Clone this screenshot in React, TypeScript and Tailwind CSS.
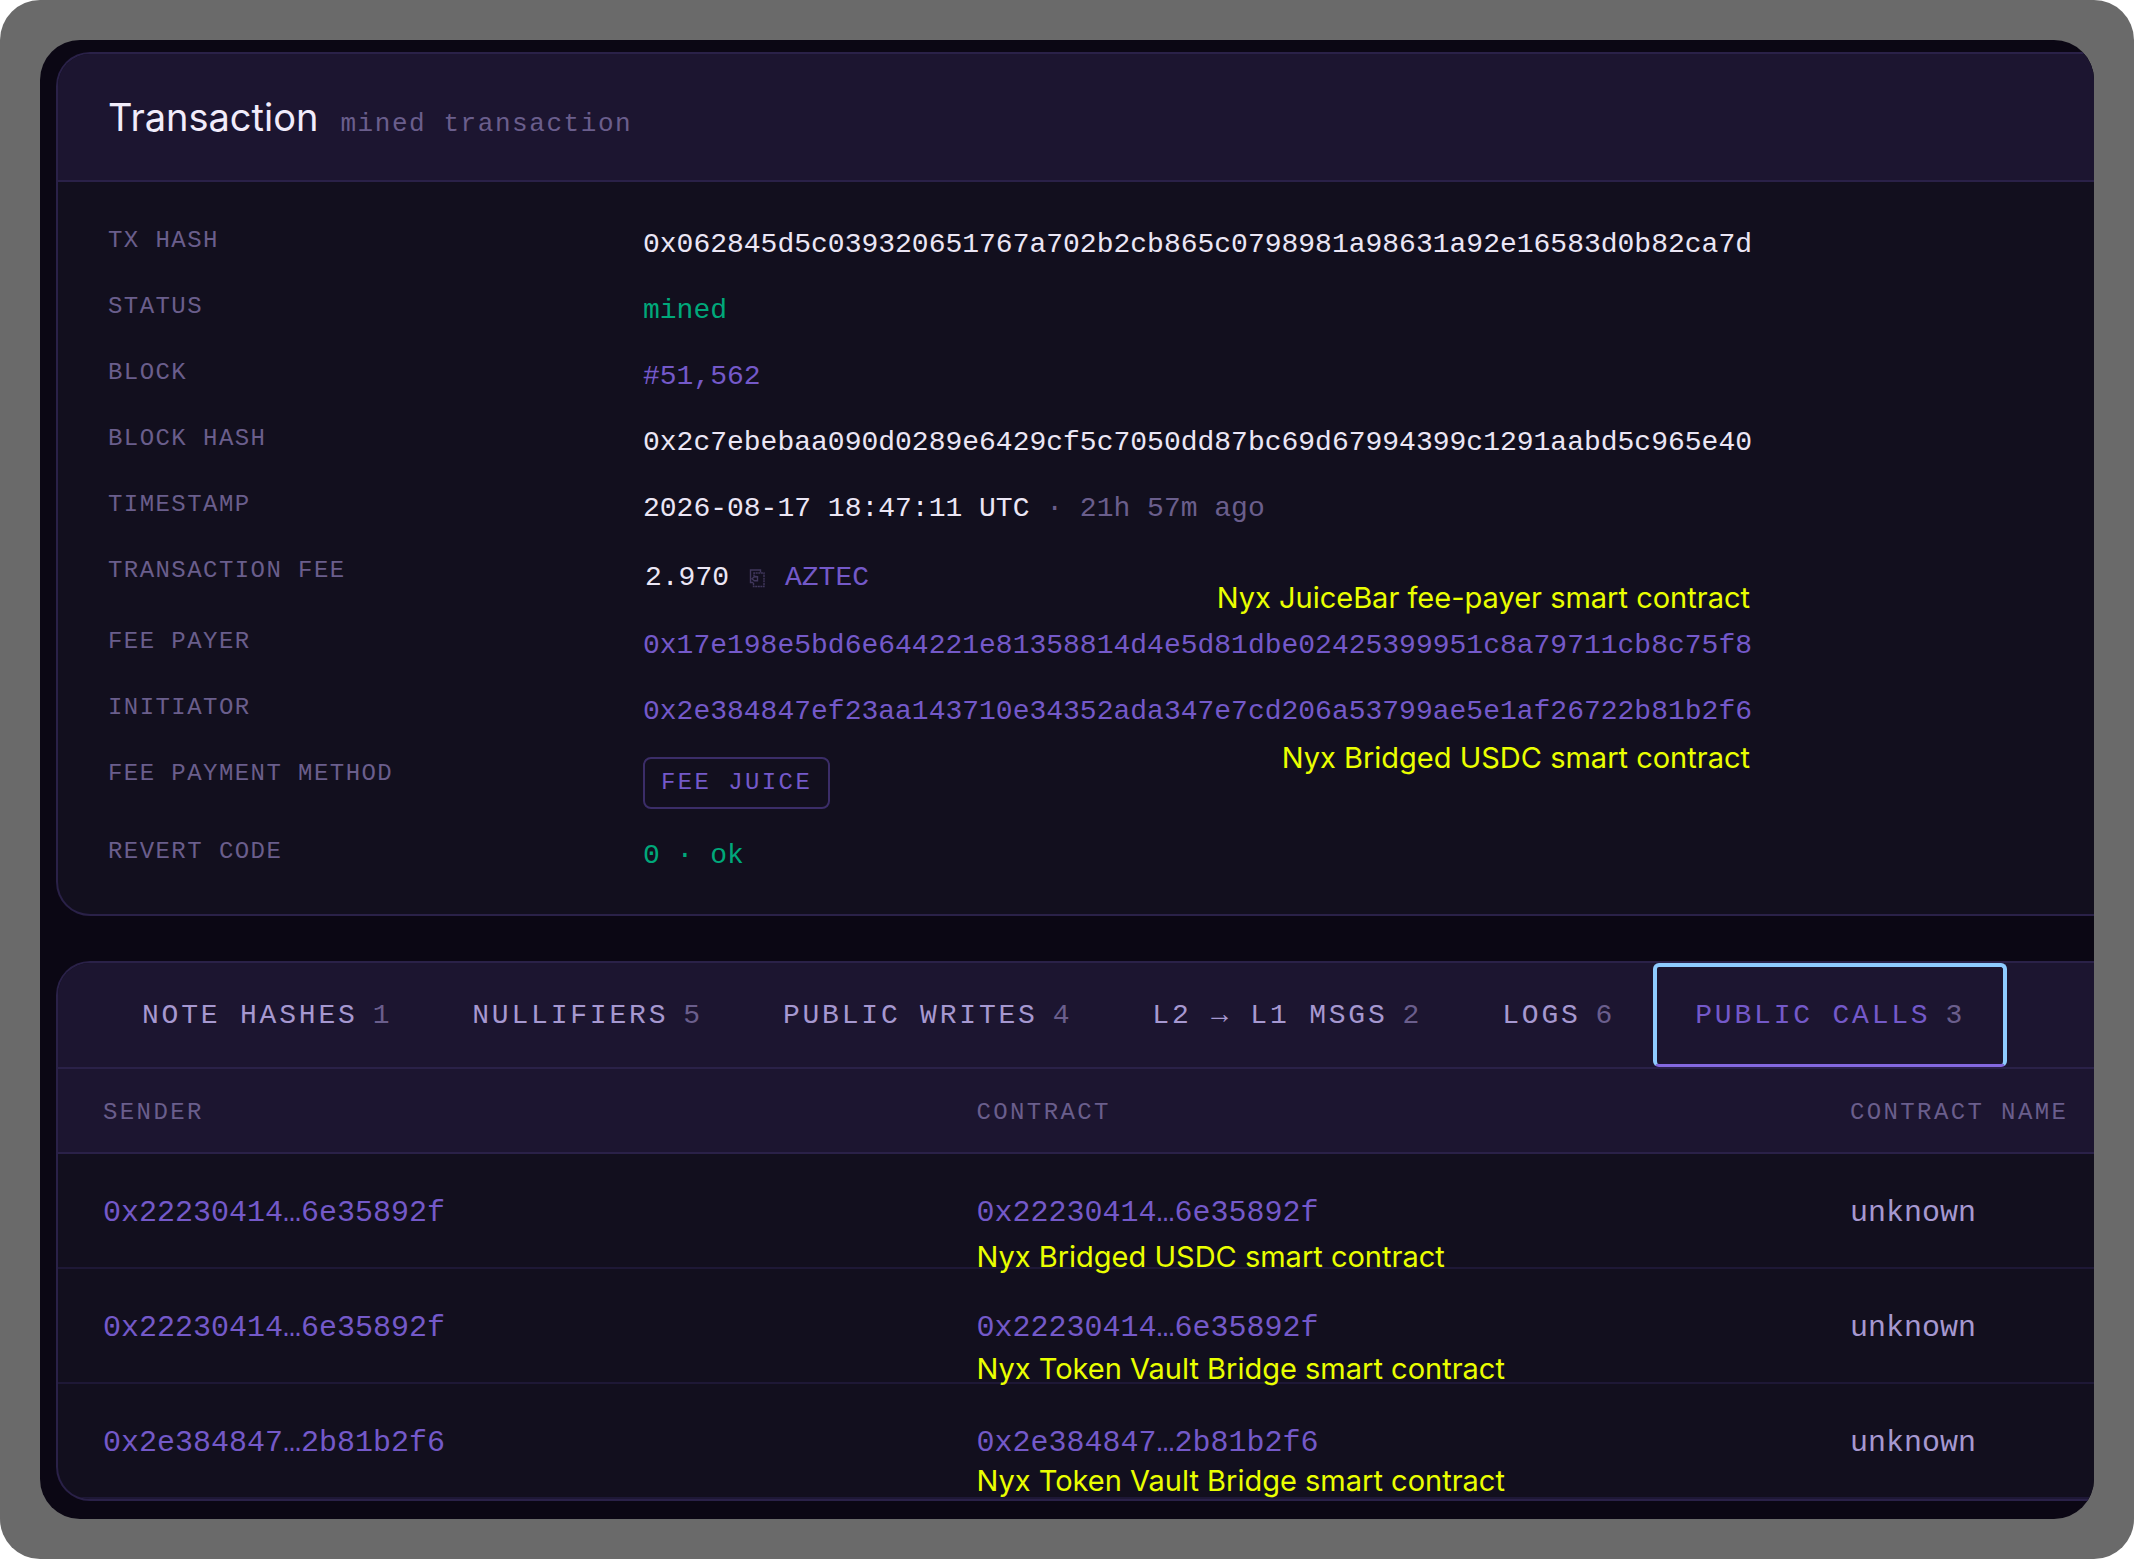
import type { ReactNode } from 'react';

const details: { label: string; value: ReactNode; note?: string; notePosition?: string }[] = [
  { label: 'Tx hash', value: '0x062845d5c039320651767a702b2cb865c0798981a98631a92e16583d0b82ca7d' },
  { label: 'Status', value: <span className="text-[#00a87a]">mined</span> },
  { label: 'Block', value: <a href="#block" className="text-[#7459c9]">#51,562</a> },
  { label: 'Block hash', value: '0x2c7ebebaa090d0289e6429cf5c7050dd87bc69d67994399c1291aabd5c965e40' },
  {
    label: 'Timestamp',
    value: <>2026-08-17 18:47:11 UTC <span className="text-[#6a5e8c]">· 21h 57m ago</span></>,
  },
  {
    label: 'Transaction fee',
    value: (
      <span className="flex h-[47px] items-center pl-0.5">
        2.970
        <button type="button" aria-label="Copy fee" className="mx-[20px] text-[#40375c]">
          <CopyGlyph />
        </button>
        <a href="#aztec" className="text-[#7459c9]">AZTEC</a>
      </span>
    ),
  },
  {
    label: 'Fee payer',
    value: <a href="#payer" className="text-[#7459c9]">0x17e198e5bd6e644221e81358814d4e5d81dbe02425399951c8a79711cb8c75f8</a>,
    note: 'Nyx JuiceBar fee-payer smart contract',
    notePosition: 'bottom-full mb-2.5',
  },
  {
    label: 'Initiator',
    value: <a href="#initiator" className="text-[#7459c9]">0x2e384847ef23aa143710e34352ada347e7cd206a53799ae5e1af26722b81b2f6</a>,
    note: 'Nyx Bridged USDC smart contract',
    notePosition: 'top-full mt-2',
  },
  {
    label: 'Fee payment method',
    value: (
      <span className="mb-0.5 flex h-[52px] w-fit items-center rounded-lg border-2 border-[#3b2d68] px-4 text-[24px] uppercase tracking-widest text-[#7459c9]">
        Fee Juice
      </span>
    ),
  },
  { label: 'Revert code', value: <span className="text-[#00a87a]">0 · ok</span> },
];

const tabs = [
  { name: 'Note hashes', count: 1 },
  { name: 'Nullifiers', count: 5 },
  { name: 'Public writes', count: 4 },
  { name: 'L2 → L1 msgs', count: 2 },
  { name: 'Logs', count: 6 },
  { name: 'Public calls', count: 3, active: true },
];

const calls = ['0x22230414…6e35892f', '0x22230414…6e35892f', '0x2e384847…2b81b2f6'];

const callNotes = [
  'Nyx Bridged USDC smart contract',
  'Nyx Token Vault Bridge smart contract',
  'Nyx Token Vault Bridge smart contract',
];

function CopyGlyph() {
  return (
    <svg width="16" height="20" viewBox="0 0 16 20" fill="none" stroke="currentColor" strokeWidth="1.4">
      <path d="M11.5 4.5V2H1.5V14.5H4.5" />
      <path d="M4.5 15V18.5H15V5H5V8.5H8" strokeDasharray="2 0.6" />
      <path d="M3 10.8L5.5 8.8H8.5V12.8H5.5Z" />
    </svg>
  );
}

function Note({ children, className = '' }: { children: ReactNode; className?: string }) {
  return (
    <span className={`whitespace-nowrap font-['Inter',sans-serif] text-[29px] leading-[34px] text-[#eaff00] ${className}`}>
      {children}
    </span>
  );
}

export default function App() {
  return (
    <div className="bg-white">
      <div className="rounded-[40px] bg-[#6a6a6a] p-10">
        <main className="overflow-hidden rounded-[40px] bg-[#0b0714] pb-[18px] pl-4 pt-3 font-['Liberation_Mono',monospace]">
          <section className="overflow-hidden rounded-l-[34px] border-2 border-r-0 border-[#2a2148] bg-[#120f1e]">
            <header className="flex h-[128px] items-baseline gap-[22px] border-b-2 border-[#2a2148] bg-[#1c1530] pl-[50px] pt-[39px]">
              <h1 className="font-['Inter',sans-serif] text-[38px] leading-[48px] text-[#f1ecfb]">Transaction</h1>
              <p className="text-[26px] tracking-[0.06em] text-[#6a5e8c]">mined transaction</p>
            </header>

            <dl className="flex flex-col gap-6 pb-[37px] pl-[50px] pt-[42px]">
              {details.map((row) => (
                <div key={row.label} className="grid grid-cols-[535px_1fr]">
                  <dt className="text-[24px] uppercase leading-[34px] tracking-[0.06em] text-[#6a5e8c]">{row.label}</dt>
                  <dd className="relative w-fit whitespace-nowrap text-[28px] leading-[42px] text-[#ebe6f5]">
                    {row.value}
                    {row.note && <Note className={`absolute right-0.5 ${row.notePosition}`}>{row.note}</Note>}
                  </dd>
                </div>
              ))}
            </dl>
          </section>

          <section className="relative mt-[45px] overflow-hidden rounded-l-[34px] border-2 border-r-0 border-[#2a2148] bg-[#120f1e]">
            <div role="tablist" className="flex h-[106px] border-b-2 border-[#2a2148] bg-[#1c1530] pl-11">
              {tabs.map((tab) => (
                <button
                  key={tab.name}
                  type="button"
                  role="tab"
                  aria-selected={!!tab.active}
                  className={`flex shrink-0 items-center gap-[15px] whitespace-nowrap text-[28px] uppercase tracking-widest ${
                    tab.active
                      ? '-mx-[2px] rounded-md border-4 border-b-[3px] border-[#8ecbff] border-b-[#8468e0] px-[38px] text-[#7459c9]'
                      : 'px-10 pt-0.5 text-[#a698d0]'
                  }`}
                >
                  {tab.name}
                  <span className="text-[#6a5e8c]">{tab.count}</span>
                </button>
              ))}
            </div>

            <table className="w-full table-fixed border-separate border-spacing-0 text-left [&_td]:border-b-2 [&_td]:border-[#1e1836] [&_td]:pl-[45px] [&_td]:pt-1.5 [&_th]:border-b-2 [&_th]:border-[#2a2148] [&_th]:pl-[45px] [&_th]:pt-1 [&_th]:font-normal">
              <thead>
                <tr className="h-[85px] bg-[#1c1530] text-[24px] uppercase tracking-widest text-[#6a5e8c]">
                  <th className="w-[42.9%]">Sender</th>
                  <th className="w-[42.9%]">Contract</th>
                  <th className="whitespace-nowrap">Contract name</th>
                </tr>
              </thead>
              <tbody>
                {calls.map((address, i) => (
                  <tr key={i} className="h-[115px] text-[30px]">
                    <td><a href="#sender" className="text-[#7459c9]">{address}</a></td>
                    <td><a href="#contract" className="text-[#7459c9]">{address}</a></td>
                    <td className="text-[#a698d0]">unknown</td>
                  </tr>
                ))}
              </tbody>
            </table>

            <div className="absolute bottom-0 left-[42.9%] flex flex-col gap-[78px] pb-px pl-[45px]">
              {callNotes.map((note, i) => <Note key={i}>{note}</Note>)}
            </div>
          </section>
        </main>
      </div>
    </div>
  );
}
